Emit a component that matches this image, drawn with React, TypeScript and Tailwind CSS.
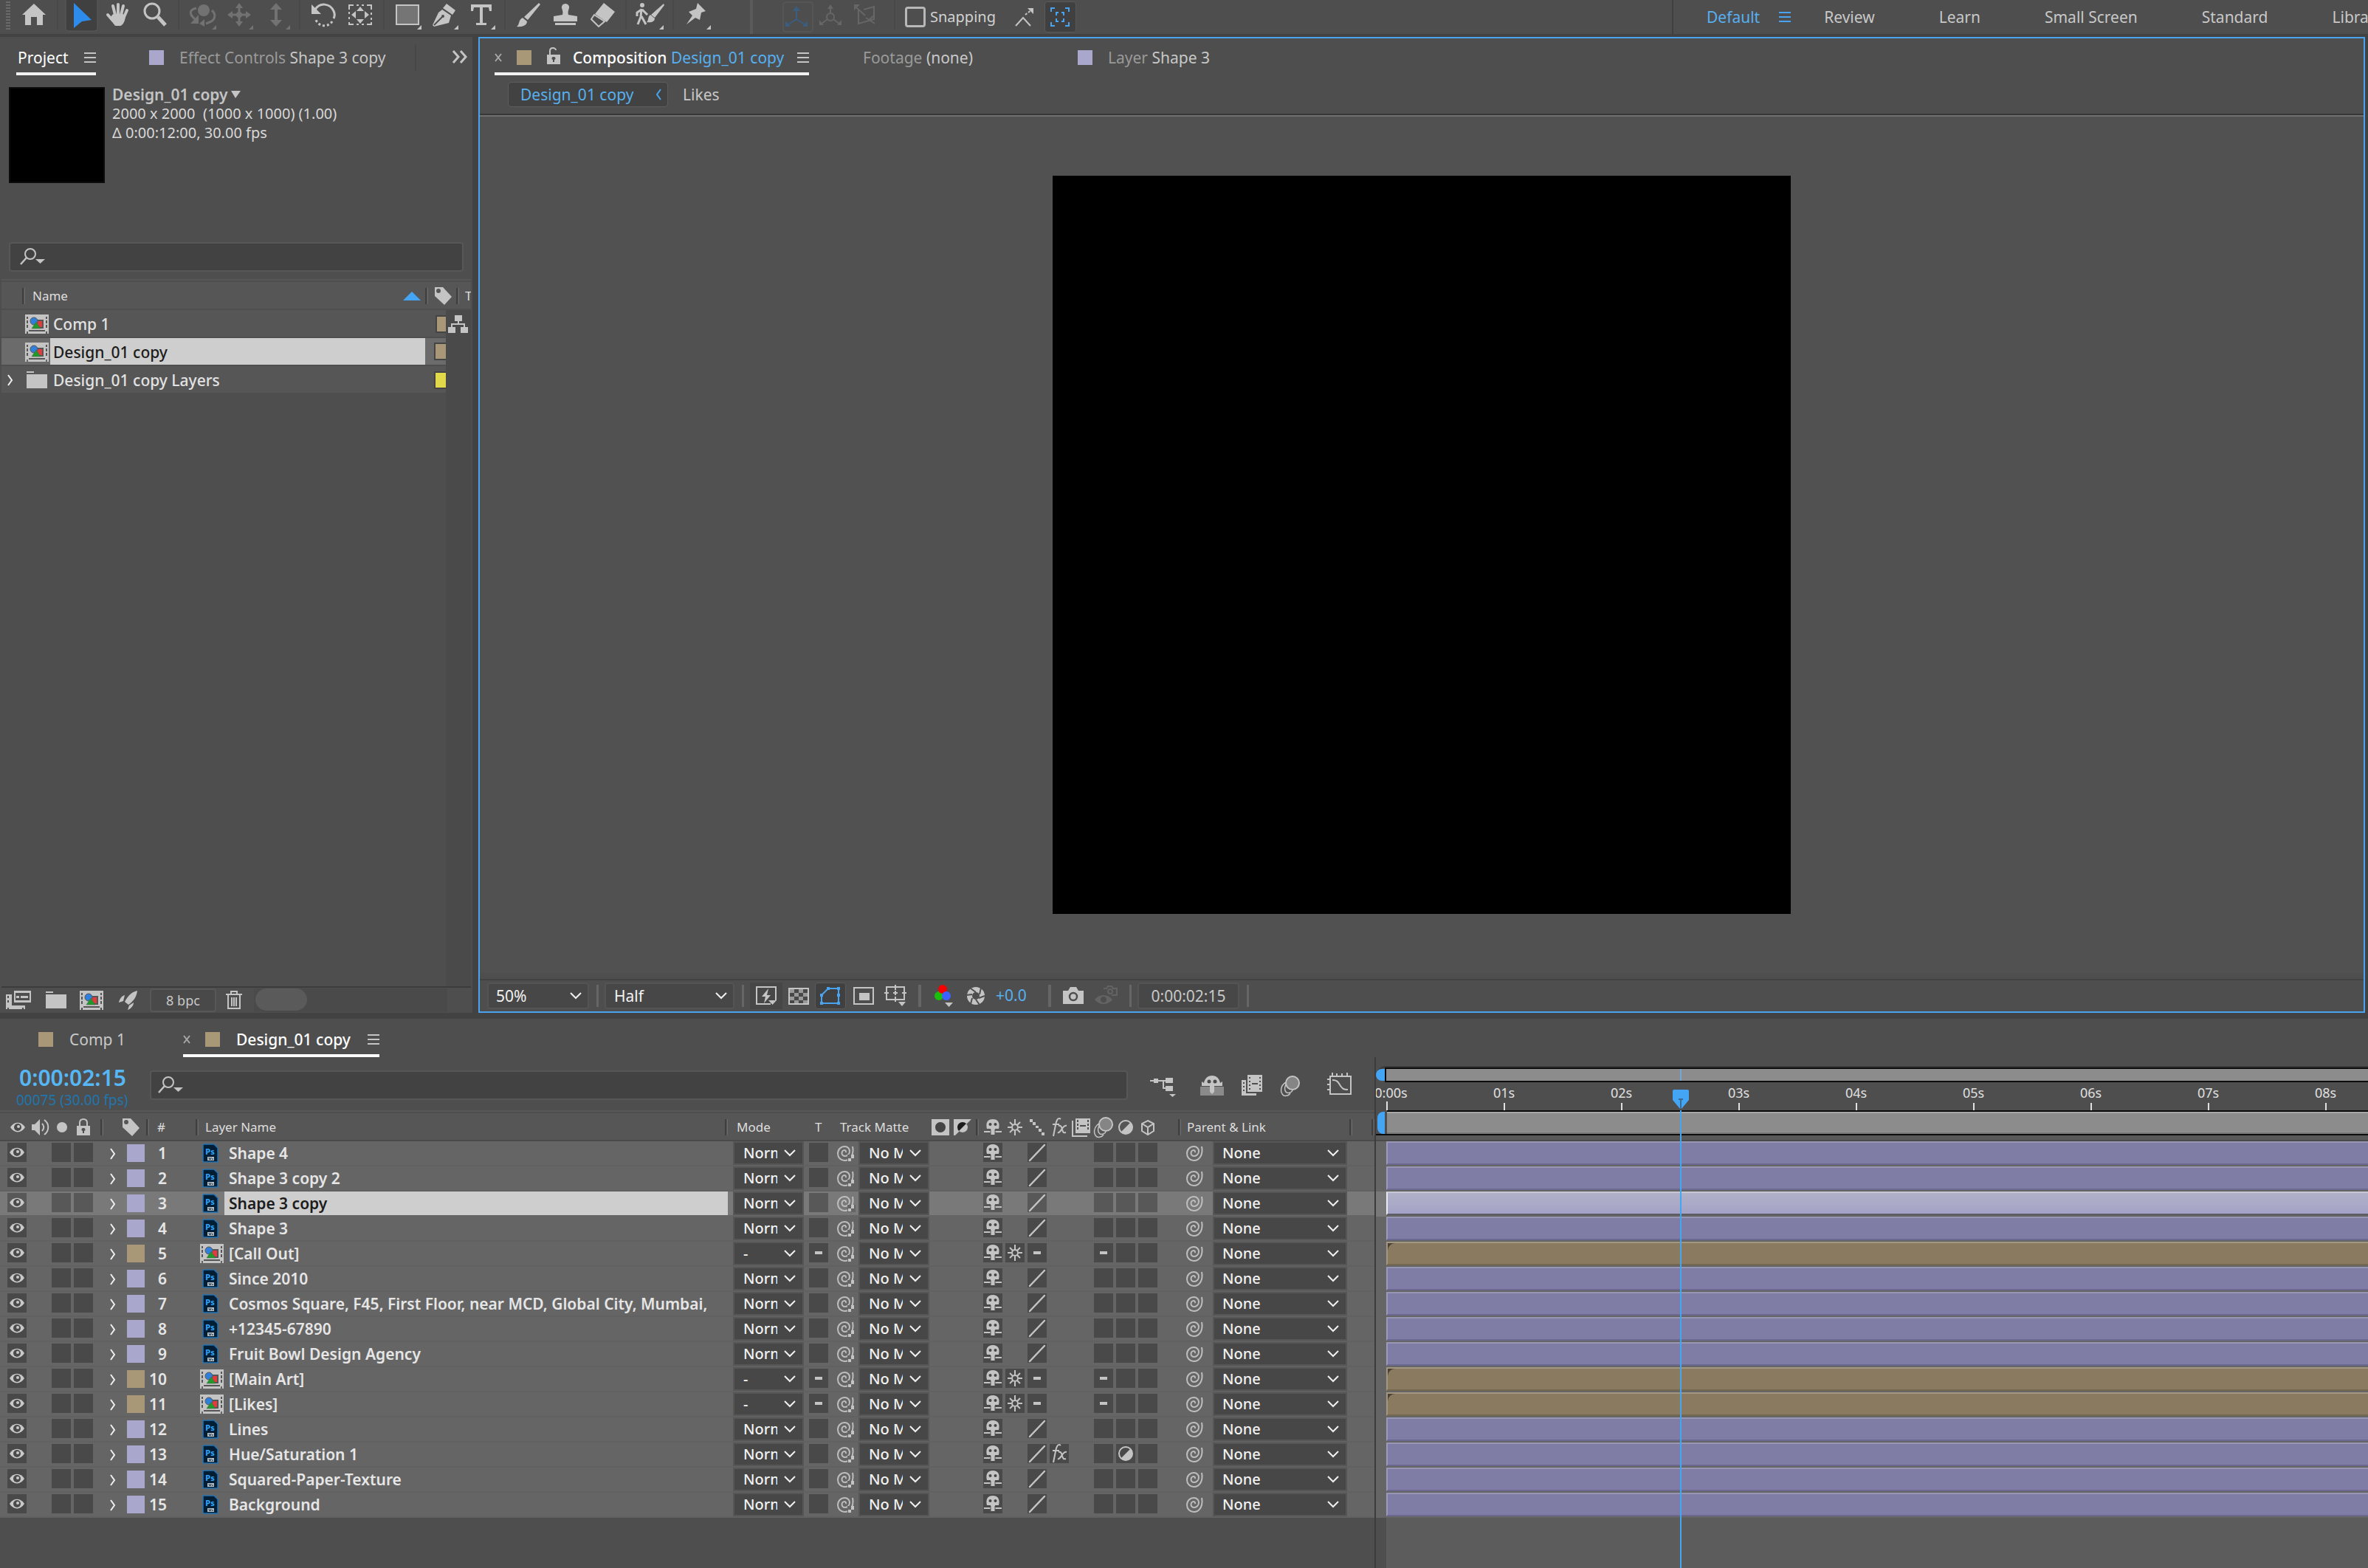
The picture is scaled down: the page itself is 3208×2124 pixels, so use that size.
import { useState } from 'react'
import type { ReactNode } from 'react'
import { twMerge } from 'tailwind-merge'

interface TypeLayer {
  name: string
  comp?: boolean
  fx?: boolean
  adjust?: boolean
}

const layers: TypeLayer[] = [
  { name: 'Shape 4' },
  { name: 'Shape 3 copy 2' },
  { name: 'Shape 3 copy' },
  { name: 'Shape 3' },
  { name: '[Call Out]', comp: true },
  { name: 'Since 2010' },
  { name: 'Cosmos Square, F45, First Floor, near MCD, Global City, Mumbai,' },
  { name: '+12345-67890' },
  { name: 'Fruit Bowl Design Agency' },
  { name: '[Main Art]', comp: true },
  { name: '[Likes]', comp: true },
  { name: 'Lines' },
  { name: 'Hue/Saturation 1', fx: true, adjust: true },
  { name: 'Squared-Paper-Texture' },
  { name: 'Background' },
]

const seconds = ['0:00s', '01s', '02s', '03s', '04s', '05s', '06s', '07s', '08s']

/* ---------- icons ---------- */

function Svg({ w, h, className, children }: { w: number; h: number; className?: string; children: ReactNode }) {
  return <svg width={w} height={h} viewBox={`0 0 ${w} ${h}`} className={twMerge('block shrink-0', className)} fill="none" aria-hidden="true">{children}</svg>
}

function MenuIcon({ className }: { className?: string }) {
  return <Svg w={16} h={16} className={twMerge('text-[#c4c4c4]', className)}>
    <path d="M0 2h16M0 8h16M0 14h16" stroke="currentColor" strokeWidth="2" />
  </Svg>
}

function CloseIcon() {
  return <Svg w={10} h={12}><path d="M1 1l8 10M9 1L1 11" stroke="#a8a8a8" strokeWidth="2" /></Svg>
}

function ChevronDown({ className }: { className?: string }) {
  return <Svg w={16} h={10} className={className}><path d="M1 1l7 7 7-7" stroke="#f0f0f0" strokeWidth="2" /></Svg>
}

function ChevronRight() {
  return <Svg w={8} h={16}><path d="M1 1l5 7-5 7" stroke="#f0f0f0" strokeWidth="2" /></Svg>
}

function SearchIcon() {
  return <Svg w={36} h={26}>
    <circle cx="15" cy="9" r="7" stroke="#c4c4c4" strokeWidth="2" />
    <path d="M10 14L2 23" stroke="#c4c4c4" strokeWidth="2.5" />
    <path d="M22 16h13l-6.500 6z" fill="#c4c4c4" />
  </Svg>
}

function TagIcon() {
  return <Svg w={24} h={26}>
    <path d="M1 1h11l12 13-10 11L1 13z" fill="#c4c4c4" />
    <circle cx="6" cy="6" r="3" fill="#565656" />
  </Svg>
}

function CompIcon() {
  return <Svg w={32} h={26}>
    <path d="M0 0h32v26h-2v-3h-2v3H4v-3H2v3H0z" fill="#c4c4c4" />
    <path d="M2 3h2v3H2zM2 8h2v4H2zM2 14h2v4H2zM28 3h2v3h-2zM28 8h2v4h-2zM28 14h2v4h-2zM5 21h22v2H5z" fill="#565656" />
    <rect x="14" y="7" width="11" height="12" fill="#565656" />
    <rect x="16" y="9" width="7" height="8" fill="#e23b3b" />
    <circle cx="12" cy="9" r="5" fill="#2f80dd" stroke="#565656" />
    <path d="M15 10l6 9H9z" fill="#1f9a2a" stroke="#565656" strokeWidth=".5" />
  </Svg>
}

function PsIcon() {
  return <svg width="22" height="26" viewBox="0 0 22 26" className="block shrink-0" aria-hidden="true">
    <path d="M2 1h14l5 5v19H2a1 1 0 0 1-1-1V2a1 1 0 0 1 1-1z" fill="#001e36" stroke="#2673b0" strokeWidth="1.500" />
    <text x="10.500" y="15" textAnchor="middle" fontSize="11" fontWeight="700" fontFamily="Noto Sans" fill="#31a8ff">Ps</text>
    <path d="M7 18h9v5H7z" fill="#b9c0c6" />
    <path d="M9 19l1 3M12 19l-1 3M14 20v2" stroke="#001e36" />
  </svg>
}

function FolderIcon() {
  return <Svg w={28} h={24}><path d="M0 0h10v2H0zM0 4h28v19H0z" fill="#c4c4c4" /></Svg>
}

function EyeIcon() {
  return <Svg w={22} h={16}>
    <path d="M1 8c5-8.500 15-8.500 20 0-5 8.500-15 8.500-20 0z" fill="#c9c9c9" />
    <circle cx="11" cy="8" r="5" fill="#4a4a4a" />
    <circle cx="12" cy="7" r="2" fill="#c9c9c9" />
  </Svg>
}

function LockIcon({ open }: { open?: boolean }) {
  return <Svg w={20} h={24}>
    <rect x="1" y="10" width="18" height="13" fill="#c4c4c4" />
    <path d={open ? 'M5 10V5c0-2 1-4 4-4s4 2 4 3' : 'M5 10V6c0-3 2-5 5-5s5 2 5 5v4'} stroke="#c4c4c4" strokeWidth="2" />
    <path d="M10 13a2 2 0 0 1 1 4v3H9v-3a2 2 0 0 1 1-4z" fill="#4e4e4e" />
  </Svg>
}

function ShyIcon() {
  return <Svg w={24} h={24}>
    <path d="M4 14c-2-8 1-13 8-13s10 5 8 13h-5v8h-6v-8z" fill="#c4c4c4" />
    <circle cx="8.500" cy="8" r="2" fill="#454545" /><circle cx="15.500" cy="8" r="2" fill="#454545" />
    <path d="M0 18h9M15 18h9" stroke="#c4c4c4" strokeWidth="2" />
    <path d="M9 15v8M15 15v8" stroke="#505050" />
  </Svg>
}

function SunIcon() {
  return <Svg w={24} h={24}>
    <circle cx="12" cy="12" r="4" stroke="#c4c4c4" strokeWidth="2" />
    <path d="M12 1v6M12 17v6M2 12h5M17 12h5M5 5l4 4M15 15l4 4M19 5l-4 4M9 15l-4 4" stroke="#c4c4c4" strokeWidth="2" />
  </Svg>
}

function FxIcon() {
  return <Svg w={24} h={28}>
    <path d="M14 3c-4-3-6 2-7 8L4 26M3 10h9" stroke="#c4c4c4" strokeWidth="2" />
    <path d="M11 12c3-1 4 1 5 5s2 5 5 4M22 12c-3-1-5 2-7 5s-3 5-5 4" stroke="#c4c4c4" strokeWidth="2" />
  </Svg>
}

function FrameBlendIcon() {
  return <Svg w={26} h={26}>
    <path d="M5 1h20v20H5z" fill="#c4c4c4" />
    <path d="M1 4v21h20" stroke="#c4c4c4" strokeWidth="2" />
    <path d="M7 3h2v3H7zM7 8h2v3H7zM7 13h2v3H7zM21 3h2v3h-2zM21 8h2v3h-2zM21 13h2v3h-2zM11 10h8v2h-8z" fill="#505050" />
  </Svg>
}

function MotionBlurIcon() {
  return <Svg w={28} h={30}>
    <path d="M8 10c-8 5-8 14-3 18 3 1 7 0 9-3M12 8c-6 5-7 13-3 16 3 1 7 0 8-3" stroke="#c4c4c4" strokeWidth="1.500" />
    <circle cx="17" cy="11" r="9" fill="#858585" stroke="#c4c4c4" strokeWidth="2" />
  </Svg>
}

function AdjustIcon() {
  return <Svg w={24} h={24}>
    <circle cx="12" cy="12" r="9" stroke="#c4c4c4" strokeWidth="2" />
    <path d="M18.500 5.500A9 9 0 1 1 5.500 18.500z" fill="#c4c4c4" />
  </Svg>
}

function CubeIcon() {
  return <Svg w={24} h={24}><path d="M12 3l8 4v10l-8 5-8-5V7zM4 7l8 5 8-5M12 12v10" stroke="#c4c4c4" strokeWidth="2" /></Svg>
}

function StepsIcon() {
  return <Svg w={24} h={24}><path d="M2 1h4v4H2zM6 5h4v4H6zM10 10h4v3h-4zM14 14h4v4h-4zM18 19h4v4h-4z" fill="#c4c4c4" /></Svg>
}

function PickwhipIcon({ matte }: { matte?: boolean }) {
  return <Svg w={26} h={28}>
    <path d="M22 5c2 10-2 19-11 19-5 0-9-4-9-9.500S6 5 11.500 5c4 0 6.500 3 6.500 6.500S15 18 12 18s-4.500-2-4.500-4 1.500-4 3.500-4 2.500 2 1.500 3" stroke="#bdbdbd" strokeWidth="2" />
    {matte && <path d="M15 16h11v10H15z" fill="#656565" />}
    {matte && <path d="M20 16h4v5h-4zM16 21h4v4h-4z" fill="#c4c4c4" />}
  </Svg>
}

const tools: { label: string; icon: ReactNode; dim?: boolean; more?: boolean; sep?: boolean; active?: boolean }[] = [
  { label: 'Home', sep: true, icon: <path d="M25 5l16 15h-4v14h-8V23h-8v11h-8V20H9z" fill="currentColor" /> },
  { label: 'Selection Tool', active: true, icon: <path d="M15 4l24 23-13 2-11 9z" fill="#2d8ceb" /> },
  {
    label: 'Hand Tool', icon: <g stroke="currentColor" strokeWidth="4" strokeLinecap="round">
      <path d="M18 8l3 12M25 6v14M32 8l-3 12M37 14l-4 9M11 20l7 8" />
      <path d="M19 21h12l2 2c-1 5-3 9-5 10h-6l-6-8z" fill="currentColor" strokeLinejoin="round" />
    </g>
  },
  { label: 'Zoom Tool', sep: true, icon: <g stroke="currentColor"><circle cx="21" cy="15" r="10" strokeWidth="3" /><path d="M29 23l10 11" strokeWidth="5" /></g> },
  {
    label: 'Orbit Tool', dim: true, more: true, icon: <g>
      <circle cx="27" cy="14" r="8" fill="currentColor" />
      <path d="M17 11c-10 2-9 8-4 13l4 4M38 14c6 5 5 13-3 16l-5 2" stroke="currentColor" strokeWidth="3" />
      <path d="M20 20v12H9zM28 26v10l-7-4z" fill="currentColor" />
    </g>
  },
  {
    label: 'Pan Tool', dim: true, more: true, icon: <g>
      <path d="M25 8v24M13 20h24" stroke="currentColor" strokeWidth="3" />
      <path d="M25 4l5 7H20zM25 36l5-7H20zM9 20l7-5v10zM41 20l-7-5v10z" fill="currentColor" />
      <circle cx="25" cy="20" r="4" fill="currentColor" />
    </g>
  },
  { label: 'Dolly Tool', sep: true, dim: true, more: true, icon: <path d="M25 4l8 9h-6v14h6l-8 9-8-9h6V13h-6z" fill="currentColor" /> },
  {
    label: 'Rotation Tool', icon: <g stroke="currentColor">
      <path d="M14 13c6-10 20-9 25 2 2 4 1 8 0 10" strokeWidth="3" />
      <path d="M37 29c-5 8-18 8-22-2" strokeWidth="3" strokeDasharray="3 3" />
      <path d="M9 6v13h13z" fill="currentColor" stroke="none" />
    </g>
  },
  {
    label: 'Pan Behind Tool', sep: true, icon: <g>
      <path d="M10 13V7h6M20 7h3M27 7h3M34 7h6v6M40 17v3M40 24v3M40 30v3h-6M30 33h-3M23 33h-3M16 33h-6v-3M10 26v-3M10 19v-3" stroke="currentColor" strokeWidth="2" />
      <path d="M25 9l5 6H20zM25 32l5-6H20zM13 20l6-5v10zM37 20l-6-5v10z" fill="currentColor" />
    </g>
  },
  { label: 'Rectangle Tool', more: true, icon: <rect x="10" y="7" width="30" height="26" fill="#757575" stroke="currentColor" strokeWidth="2" /> },
  {
    label: 'Pen Tool', more: true, icon: <g>
      <path d="M28 5l12 9-4 6-13-9zM22 13l12 8-3 10-20 5-2-2L17 17z" fill="currentColor" />
      <path d="M11 34l11-11" stroke="#4e4e4e" strokeWidth="2" /><circle cx="23" cy="22" r="2" fill="#4e4e4e" />
    </g>
  },
  { label: 'Type Tool', more: true, sep: true, icon: <path d="M11 6h28v9h-3l-1-5h-8v21h5v3H18v-3h5V10h-8l-1 5h-3z" fill="currentColor" /> },
  { label: 'Brush Tool', icon: <path d="M39 4l2 2-17 21-5-4zM17 24l6 5c0 5-6 8-14 7 4-2 2-9 8-12z" fill="currentColor" /> },
  { label: 'Clone Stamp Tool', icon: <path d="M25 5a5 5 0 0 1 5 6c-1 3-2 5-1 9l12 2v7H9v-7l12-2c1-4 0-6-1-9a5 5 0 0 1 5-6zM11 31h28v3H11z" fill="currentColor" /> },
  {
    label: 'Eraser Tool', sep: true, icon: <g>
      <path d="M27 4l15 12-11 14-16-11z" fill="currentColor" /><path d="M14 20l14 9-8 7-10-10z" stroke="currentColor" strokeWidth="2" />
    </g>
  },
  {
    label: 'Roto Brush Tool', more: true, sep: true, icon: <g>
      <circle cx="15" cy="7" r="3" fill="currentColor" />
      <path d="M14 12l-1 11-4 10M14 22l6 11M14 13l-6 4v5M15 13l7 7" stroke="currentColor" strokeWidth="3" />
      <path d="M44 5l1 2-13 17-5-4zM26 20l6 5c0 4-4 6-11 5 3-2 1-7 5-10z" fill="currentColor" />
    </g>
  },
  { label: 'Puppet Pin Tool', more: true, icon: <path d="M26 4l11 11-6 2-2 10-6-3-12 9 8-12-5-5 10-4z" fill="currentColor" /> },
]

/* ---------- small parts ---------- */

function Divider({ className }: { className?: string }) {
  return <span className={twMerge('h-[22px] w-1 shrink-0 border-l-2 border-r border-l-[#3f3f3f] border-r-[#6a6a6a]', className)} />
}

function Swatch({ className }: { className?: string }) {
  return <span className={twMerge('h-5 w-5 shrink-0 bg-[#a89878]', className)} />
}

function Switch({ lit, show = true, label, children }: { lit?: boolean; show?: boolean; label: string; children?: ReactNode }) {
  if( !show ){
    return <span className="w-[26px]" />
  }
  return <button aria-label={label} className={twMerge('flex h-[26px] w-[26px] items-center justify-center overflow-hidden bg-[#494949]', lit && 'bg-[#585858]')}>{children}</button>
}

function Dash() {
  return <span className="h-1 w-2.5 bg-[#c4c4c4]" />
}

function Dropdown({ label, value, className, selectClass, chevronClass }: { label: string; value: string; className?: string; selectClass?: string; chevronClass?: string }) {
  return <div className={twMerge('relative h-8 border-2 border-[#565656] bg-[#474747]', className)}>
    <select aria-label={label} className={twMerge('block h-7 w-full appearance-none bg-transparent text-[20px] leading-7 text-[#f2f2f2]', selectClass)}>
      <option>{value}</option>
    </select>
    <ChevronDown className={twMerge('pointer-events-none absolute right-2 top-2', chevronClass)} />
  </div>
}

/* ---------- panels ---------- */

function Toolbar() {
  const [snapping, setSnapping] = useState(false)

  return <header className="flex h-[46px] shrink-0 items-stretch overflow-hidden bg-[#4e4e4e] text-[21px] text-[#c8c8c8]">
    <div className="mr-[7px] flex w-[14px] justify-end">
      <span className="h-10 w-1.5 bg-[repeating-linear-gradient(#4e4e4e_0_2px,#6a6a6a_2px_4px)]" />
    </div>
    {
      tools.map((tool)=>{
        return <div className="flex" key={tool.label}>
          <button aria-label={tool.label} className={twMerge('w-[50px] text-[#c4c4c4]', tool.dim && 'text-[#727272]')}>
            <Svg w={50} h={46}>
              {tool.active && <rect x="4" y="-4" width="43" height="46" rx="4" fill="#404040" stroke="#5a5a5a" />}
              {tool.icon}
              {tool.more && <path d="M44 34v6h-6z" fill="currentColor" />}
            </Svg>
          </button>
          {tool.sep && <span className="mx-1.5 h-10 w-0.5 bg-[#484848]" />}
        </div>
      })
    }
    <span className="ml-[47px] mr-9 h-full w-1 bg-[#5a5a5a]" />
    <button aria-label="Local Axis Mode" className="w-[46px]">
      <Svg w={46} h={46}>
        <rect x="5" y="3" width="40" height="40" rx="3" stroke="#5c5c5c" />
        <path d="M23 12v14l-11 7M23 26l11 7" stroke="#3a5d80" strokeWidth="2" />
        <path d="M23 8l5 7H18zM8 36v-8l7 8zM38 36v-8l-7 8z" fill="#3a5d80" />
      </Svg>
    </button>
    <button aria-label="World Axis Mode" className="w-[46px]">
      <Svg w={46} h={46}>
        <circle cx="23" cy="23" r="5" stroke="#666" strokeWidth="2" />
        <path d="M23 10v8M19 26l-8 6M27 26l8 6" stroke="#666" strokeWidth="2" />
        <path d="M23 6l4 6h-8zM8 34v-7l6 7zM38 34v-7l-6 7z" fill="#666" />
      </Svg>
    </button>
    <button aria-label="View Axis Mode" className="w-[46px]">
      <Svg w={46} h={46}>
        <path d="M15 13v19l21-6V9l-14 4M12 10l12 11M25 24l12 8M37 20l-10 9" stroke="#666" strokeWidth="2" />
        <path d="M9 6h8l-8 8z" fill="#666" />
      </Svg>
    </button>
    <span className="ml-[17px] h-10 w-0.5 bg-[#484848]" />
    <label className="ml-[13px] flex h-[46px] items-center gap-1.5 text-[20px] text-[#d2d2d2]">
      <input type="checkbox" checked={snapping} onChange={()=>{ setSnapping(!snapping) }}
        className="h-7 w-7 appearance-none rounded border-[3px] border-[#b8b8b8] checked:bg-[#2d8ceb]" />
      Snapping
    </label>
    <button aria-label="Snap beyond edges" className="ml-6">
      <Svg w={32} h={46}>
        <path d="M3 35l10-11 10 11" stroke="#c4c4c4" strokeWidth="2" />
        <path d="M16 20l9-7" stroke="#c4c4c4" strokeWidth="2" strokeDasharray="3 2" />
        <path d="M19 11h8v8z" fill="#c4c4c4" />
      </Svg>
    </button>
    <button aria-label="Snap to features" className="my-0.5 ml-2.5 flex h-[42px] w-[43px] items-center justify-center rounded border border-[#595959] bg-[#404040]">
      <Svg w={26} h={26}>
        <path d="M1 6V1h5M20 1h5v5M25 20v5h-5M6 25H1v-5M8 11V7h3M15 7h3v4M18 15v4h-3M11 19H8v-4" stroke="#4aa3ee" strokeWidth="2" />
      </Svg>
    </button>

    <nav className="ml-auto flex w-[943px] shrink-0 items-center overflow-hidden border-l-2 border-[#404040] leading-[46px]">
      <a href="#default" className="ml-[45px] text-[#57b0f0]">Default</a>
      <MenuIcon className="ml-[26px] text-[#4aa3ee]" />
      <div className="ml-[45px] flex gap-[87px]">
        {
          ['Review', 'Learn', 'Small Screen', 'Standard', 'Libraries'].map((item)=>{
            return <a href={`#${item}`} className="whitespace-nowrap" key={item}>{item}</a>
          })
        }
      </div>
    </nav>
  </header>
}

function ProjectPanel() {
  return <section className="flex w-[640px] shrink-0 flex-col overflow-hidden border-t-2 border-[#4e4e4e] bg-[#4e4e4e]">
    <div className="flex h-[50px] shrink-0 items-start">
      <button className="ml-[22px] flex h-[50px] w-[108px] items-center justify-between border-b-4 border-[#f2f2f2] pl-0.5 pt-1.5 text-[21px] leading-10 text-white">
        Project<MenuIcon />
      </button>
      <button className="ml-[72px] flex h-[46px] items-center whitespace-nowrap pt-1.5 text-[21px] leading-10 text-[#9a9a9a]">
        <Swatch className="mr-[21px] bg-[#aaa7cc]" />Effect Controls&nbsp;<span className="text-[#c8c8c8]">Shape 3 copy</span>
      </button>
      <span className="ml-auto mt-2 h-9 w-0.5 bg-[#474747]" />
      <button aria-label="More panels" className="ml-[48px] mr-1.5 mt-4">
        <Svg w={22} h={18}><path d="M2 1l7 8-7 8M12 1l7 8-7 8" stroke="#c4c4c4" strokeWidth="3" /></Svg>
      </button>
    </div>

    <div className="mt-[13px] flex h-[213px] shrink-0">
      <div className="ml-3 mr-2.5 mt-[3px] h-[130px] w-[130px] border-2 border-[#0c0c0c] bg-black" />
      <div className="text-[20px] leading-[26px] text-[#d8d8d8]">
        <div className="flex items-center gap-1 text-[21px] font-semibold text-[#c4c4c4]">
          Design_01 copy
          <Svg w={13} h={10}><path d="M0 0h13L6 10z" fill="#c4c4c4" /></Svg>
        </div>
        <div className="whitespace-pre">2000 x 2000  (1000 x 1000) (1.00)</div>
        <div>Δ 0:00:12:00, 30.00 fps</div>
      </div>
    </div>

    <label className="mx-3 flex h-10 shrink-0 items-center rounded border-2 border-[#575757] bg-[#424242] pl-3">
      <SearchIcon />
      <input type="text" aria-label="Search project" className="ml-2 h-8 grow bg-transparent text-[20px] text-white outline-none" />
    </label>

    <div className="ml-0.5 mr-0.5 mt-2.5 h-0.5 shrink-0 bg-[#575757]" />
    <div className="ml-0.5 mr-0.5 mt-0.5 flex h-9 shrink-0 items-center overflow-hidden bg-[#565656] pt-0.5 text-[17px] text-[#dedede]">
      <Divider className="ml-[28px]" />
      <span className="ml-2.5">Name</span>
      <Svg w={24} h={12} className="ml-auto"><path d="M0 12L12 0l12 12z" fill="#45a5f5" /></Svg>
      <Divider className="ml-1.5" />
      <span className="ml-2"><TagIcon /></span>
      <Divider className="ml-1.5" />
      <span className="ml-2 w-2 overflow-hidden">T</span>
    </div>

    <div className="mt-0.5 flex grow">
      <div className="ml-0.5 flex grow flex-col gap-0.5 text-[21px] font-medium leading-9 text-[#e2e2e2]">
        <div className="flex h-9 items-center bg-[#565656] pt-0.5">
          <span className="ml-8 mr-1.5"><CompIcon /></span>Comp 1
          <Swatch className="ml-auto h-6 w-3.5 border-2 border-r-0 border-[#444]" />
        </div>
        <div className="flex h-9 items-center bg-[#6b6b6b]">
          <span className="ml-8 mr-0.5 pt-0.5"><CompIcon /></span>
          <span className="h-9 grow bg-[#cecece] pl-1 pt-px text-[#1c1c1c]">Design_01 copy</span>
          <Swatch className="ml-3 h-6 w-4 border-2 border-r-0 border-[#444]" />
        </div>
        <div className="flex h-9 items-center bg-[#565656] pt-0.5">
          <span className="ml-2 mr-[18px]"><ChevronRight /></span>
          <span className="mr-2"><FolderIcon /></span>Design_01 copy Layers
          <Swatch className="ml-auto h-6 w-4 border-2 border-r-0 border-[#444] bg-[#e2d94a]" />
        </div>
      </div>
      <div className="mr-0.5 w-[34px] shrink-0 bg-[#4a4a4a] pl-[3px] pt-1.5">
        <Svg w={28} h={26}>
          <path d="M9 1h10v8H9zM0 17h10v8H0zM17 17h10v8H17z" fill="#c4c4c4" />
          <path d="M14 9v4M5 17v-4h17v4" stroke="#c4c4c4" strokeWidth="2" />
        </Svg>
      </div>
    </div>

    <div className="mx-0.5 flex h-9 shrink-0 items-center border-t-2 border-[#3c3c3c]">
      <button aria-label="Interpret Footage" className="ml-1.5">
        <Svg w={34} h={28}>
          <path d="M11 1h23v16H11z" fill="#c4c4c4" />
          <path d="M13 4h19v10H13z" fill="#4e4e4e" />
          <path d="M14 8h4v3h-4zM20 8h10v3H20zM0 6h8v15h18v5h-2v-2h-2v2H4v-2H2v2H0z" fill="#c4c4c4" />
          <path d="M2 8h2v3H2zM2 14h2v3H2z" fill="#4e4e4e" />
        </Svg>
      </button>
      <button aria-label="New Folder" className="ml-5"><FolderIcon /></button>
      <button aria-label="New Composition" className="ml-[18px]"><CompIcon /></button>
      <button aria-label="Project Settings" className="ml-5">
        <Svg w={28} h={26}><path d="M26 0c-9 2-14 9-17 15l5 4C20 15 25 9 26 0zM9 6c-4 1-7 5-8 10l6-2zM21 16l-6 4-2 6c5-2 8-6 8-10z" fill="#c4c4c4" /></Svg>
      </button>
      <button className="ml-[15px] h-[32px] w-[90px] rounded border-2 border-[#575757] bg-[#494949] text-[18px] leading-7 text-[#c8c8c8]">8 bpc</button>
      <button aria-label="Delete" className="ml-[13px]">
        <Svg w={22} h={26}>
          <path d="M0 5h22M7 5V1h8v4M3 6v18h16V6M8 9v12M11 9v12M14 9v12" stroke="#c4c4c4" strokeWidth="2" />
        </Svg>
      </button>
      <div className="ml-4 mr-8 h-[32px] grow bg-[#4a4a4a]">
        <div className="ml-0.5 h-[30px] w-[70px] rounded-full bg-[#5a5a5a]" />
      </div>
    </div>
  </section>
}

function ViewerPanel() {
  return <section className="ml-2 mr-1 flex grow flex-col border-2 border-[#4aa3ee] bg-[#4e4e4e]">
    <div className="flex h-[50px] shrink-0 items-start whitespace-nowrap text-[21px] leading-10">
      <div className="ml-5 flex h-[46px] w-[426px] shrink-0 items-center pt-1.5 text-white shadow-[0_4px_0_#f2f2f2]">
        <button aria-label="Close tab"><CloseIcon /></button>
        <Swatch className="ml-5" />
        <span className="ml-5 mr-4 pb-1"><LockIcon open /></span>
        <span className="font-medium">Composition</span>&nbsp;<a href="#comp" className="text-[#57b0f0]">Design_01 copy</a>
        <MenuIcon className="ml-auto" />
      </div>
      <button className="ml-[73px] w-[150px] pt-1.5 text-left text-[#9a9a9a]">Footage <span className="text-[#c8c8c8]">(none)</span></button>
      <button className="ml-[141px] flex items-center pt-1.5 text-[#9a9a9a]">
        <Swatch className="mr-[21px] bg-[#aaa7cc]" />Layer&nbsp;<span className="text-[#c8c8c8]">Shape 3</span>
      </button>
    </div>

    <div className="flex h-[52px] shrink-0 items-start pt-[9px] text-[21px] leading-8">
      <a href="#design" className="ml-[38px] flex h-[34px] w-[217px] items-center justify-between rounded border border-[#5c5c5c] bg-[#424242] pl-4 pr-[7px] text-[#57b0f0]">
        Design_01 copy
        <Svg w={9} h={16}><path d="M7 1L2 8l5 7" stroke="#4aa3ee" strokeWidth="2" /></Svg>
      </a>
      <a href="#likes" className="ml-5 pt-px text-[#c8c8c8]">Likes</a>
    </div>

    <div className="flex grow items-center justify-center border-t-2 border-t-[#383838] bg-[#515151] pt-0.5 shadow-[inset_0_2px_0_#707070]">
      <div className="aspect-square w-[1000px] bg-black" />
    </div>

    <footer className="flex h-[52px] shrink-0 items-center pt-2 text-[21px]">
      <div className="flex h-11 grow items-center border-t-2 border-[#424242]">
        <Dropdown label="Magnification" value="50%" className="ml-2.5 h-9 w-[138px] rounded border-[#545454]" selectClass="h-8 pl-2.5 text-[21px] leading-8" chevronClass="top-[11px] right-2" />
        <span className="ml-2.5 h-[30px] w-[3px] bg-[#666]" />
        <Dropdown label="Resolution" value="Half" className="ml-2 h-9 w-[176px] rounded border-[#545454]" selectClass="h-8 pl-[11px] text-[21px] leading-8" chevronClass="top-[11px] right-2" />
        <span className="ml-2.5 h-[30px] w-[3px] bg-[#666]" />
        <button aria-label="Fast Previews" className="ml-2 flex h-9 w-11 items-center justify-center bg-[#474747]">
          <Svg w={28} h={26}>
            <path d="M20 24H1V1h26v18" stroke="#c4c4c4" strokeWidth="2" />
            <path d="M17 3L8 14h5l-2 9 9-11h-5z" fill="#c4c4c4" /><path d="M17 19h11l-5.500 6z" fill="#c4c4c4" />
          </Svg>
        </button>
        <button aria-label="Toggle Transparency Grid" className="ml-2">
          <Svg w={28} h={24}>
            <path d="M1 2h26v21H1z" stroke="#c4c4c4" strokeWidth="2" fill="#484848" />
            <path d="M2 3h6v5H2zM14 3h6v5h-6zM8 8h6v5H8zM20 8h6v5h-6zM2 13h6v5H2zM14 13h6v5h-6zM8 18h6v4H8zM20 18h6v4h-6z" fill="#999" />
          </Svg>
        </button>
        <button aria-label="Toggle Mask Visibility" className="ml-2 flex h-9 w-[42px] items-center justify-center rounded border border-[#5a5a5a] bg-[#404040]">
          <Svg w={30} h={26}>
            <path d="M3 23V12L12 3h14v20z" stroke="#4aa3ee" strokeWidth="2" />
            <path d="M1 10h4v4H1zM10 1h4v4h-4zM24 1h4v4h-4zM24 10h4v4h-4zM24 21h4v4h-4zM1 21h4v4H1z" fill="#4aa3ee" />
          </Svg>
        </button>
        <button aria-label="Region of Interest" className="ml-2.5">
          <Svg w={28} h={24}><path d="M1 1h26v22H1z" stroke="#c4c4c4" strokeWidth="2" /><path d="M8 8h14v10H8z" fill="#c4c4c4" /></Svg>
        </button>
        <button aria-label="Grid and Guides" className="ml-3.5">
          <Svg w={30} h={30}>
            <path d="M3 3h24v17H3zM15 0v7M15 16v7M0 11h6M24 11h6M12 11h6M15 8v6" stroke="#c4c4c4" strokeWidth="2" /><path d="M19 23h10l-5 6z" fill="#c4c4c4" />
          </Svg>
        </button>
        <span className="ml-4 h-[30px] w-1 bg-[#666]" />
        <button aria-label="Show Channel" className="ml-[17px]">
          <Svg w={28} h={30}>
            <circle cx="7" cy="15" r="6" fill="#19bf0c" /><circle cx="12" cy="6" r="6" fill="#f60000" /><circle cx="17" cy="15" r="6" fill="#3d62ff" />
            <path d="M15 24h11l-5.500 6z" fill="#c4c4c4" />
          </Svg>
        </button>
        <button aria-label="Reset Exposure" className="ml-4">
          <Svg w={26} h={26}>
            <circle cx="13" cy="13" r="12" fill="#c4c4c4" /><circle cx="13" cy="13" r="5" fill="#4e4e4e" />
            <path d="M13 8L6 3M18 11l2-9M17 16l8-3M13 18l5 7M8 16l-2 8M8 11l-8 1" stroke="#4e4e4e" strokeWidth="2" />
          </Svg>
        </button>
        <button className="ml-3.5 w-[71px] text-left text-[21px] text-[#57b0f0]">+0.0</button>
        <span className="h-[30px] w-1 bg-[#666]" />
        <button aria-label="Take Snapshot" className="ml-4">
          <Svg w={28} h={24}>
            <path d="M0 5h7l3-5h8l3 5h7v18H0z" fill="#c4c4c4" /><circle cx="14" cy="13" r="5" stroke="#4e4e4e" strokeWidth="2.500" />
          </Svg>
        </button>
        <button aria-label="Show Snapshot" className="ml-3.5">
          <Svg w={32} h={28}>
            <path d="M1 19c6-8 18-8 24 0-6 8-18 8-24 0z" fill="#636363" /><circle cx="13" cy="19" r="4" fill="#4e4e4e" />
            <path d="M13 4h4l2-3h5l2 3h5v9h-7" stroke="#636363" strokeWidth="2" /><circle cx="22" cy="8" r="3" stroke="#636363" strokeWidth="2" />
          </Svg>
        </button>
        <span className="ml-4 h-[30px] w-[3px] bg-[#666]" />
        <button className="ml-2 h-9 w-[138px] rounded border-2 border-[#545454] bg-[#474747] text-[21px] leading-8 text-[#c8c8c8]">0:00:02:15</button>
        <span className="ml-2.5 h-[30px] w-[3px] bg-[#666]" />
      </div>
    </footer>
  </section>
}

function LayerRow({ layer, index }: { layer: TypeLayer; index: number }) {
  const lit = index === 2

  return <tr className={twMerge('h-[34px] bg-[#656565] shadow-[inset_0_-2px_0_#616161]', lit && 'bg-[#797979] shadow-[inset_0_-2px_0_#656565]')}>
    <td className="p-0 align-top">
      <div className="flex pl-2.5 pt-0.5">
        <Switch label="Video" lit={lit}><EyeIcon /></Switch>
        <span className="w-[34px]" />
        <Switch label="Solo" lit={lit} />
        <span className="w-1" />
        <Switch label="Lock" lit={lit} />
      </div>
    </td>
    <td className="p-0 align-top">
      <div className="flex items-center pl-[13px] pt-1">
        <button aria-label="Expand layer" className="mr-[15px] pt-0.5"><ChevronRight /></button>
        <Swatch className={twMerge('h-6 w-6 bg-[#aaa7cc]', layer.comp && 'bg-[#a89878]')} />
      </div>
    </td>
    <td className="p-0 pr-[40px] text-right align-top leading-8">{index + 1}</td>
    <td className="p-0 align-top">
      <div className="flex h-8 whitespace-nowrap">
        <span className={twMerge('flex w-[38px] shrink-0 items-center justify-center', layer.comp && 'pl-1')}>{layer.comp ? <CompIcon /> : <PsIcon />}</span>
        <span className={twMerge('grow overflow-hidden pl-1.5 leading-8', lit && 'bg-[#cecece] text-[#1c1c1c]')}>{layer.name}</span>
      </div>
    </td>
    <td className="p-0 align-top">
      <Dropdown label="Mode" value={layer.comp ? '-' : 'Normal'} className="ml-[7px] w-[96px] font-medium" selectClass="pl-3 pr-[34px]" chevronClass="right-[9px] top-[9px]" />
    </td>
    <td className="p-0 align-top">
      <div className="pt-0.5"><Switch label="Preserve Transparency" lit={lit}>{layer.comp && <Dash />}</Switch></div>
    </td>
    <td className="p-0 align-top">
      <div className="flex">
        <button aria-label="Track Matte Pickwhip" className="ml-[3px] mr-1"><PickwhipIcon matte /></button>
        <Dropdown label="Track Matte" value="No Matte" className="w-[96px] font-medium" selectClass="pl-3 pr-[34px]" chevronClass="right-[9px] top-[9px]" />
      </div>
    </td>
    <td className="p-0 align-top">
      <div className="flex gap-1 pl-2 pt-0.5">
        <Switch label="Shy" lit={lit}><ShyIcon /></Switch>
        <Switch label="Collapse" show={!!layer.comp}><SunIcon /></Switch>
        <Switch label="Quality" lit={lit}>
          {layer.comp ? <Dash /> : <Svg w={26} h={26}><path d="M3 24L23 3" stroke="#c4c4c4" strokeWidth="2.500" strokeLinecap="round" /></Svg>}
        </Switch>
        <Switch label="Effects" show={!!layer.fx}><FxIcon /></Switch>
        <span className="w-[26px]" />
        <Switch label="Motion Blur" lit={lit}>{layer.comp && <Dash />}</Switch>
        <Switch label="Adjustment Layer" lit={lit}>{layer.adjust && <AdjustIcon />}</Switch>
        <Switch label="3D Layer" lit={lit} />
      </div>
    </td>
    <td className="p-0 align-top">
      <div className="flex">
        <button aria-label="Parent Pickwhip" className="ml-2 mr-[11px]"><PickwhipIcon /></button>
        <Dropdown label="Parent" value="None" className="w-[182px] font-medium" selectClass="pl-[11px]" chevronClass="right-[9px] top-[9px]" />
      </div>
    </td>
  </tr>
}

function HeadCell({ children, className }: { children?: ReactNode; className?: string }) {
  return <th className="p-0 font-normal">
    <div className={twMerge('flex h-9 items-center whitespace-nowrap pt-0.5', className)}>{children}</div>
  </th>
}

function LayerTable() {
  return <table className="w-full table-fixed border-separate border-spacing-0 text-left">
    <colgroup>
      <col className="w-[136px]" />
      <col className="w-[64px]" />
      <col className="w-[66px]" />
      <col />
      <col className="w-[110px]" />
      <col className="w-[34px]" />
      <col className="w-[194px]" />
      <col className="w-[274px]" />
      <col className="w-[264px]" />
    </colgroup>
    <thead className="bg-[#565656] text-[17px] text-[#dedede] shadow-[inset_0_-2px_0_#4a4a4a]">
      <tr className="h-[38px] align-top">
        <HeadCell className="pl-[13px]">
          <EyeIcon />
          <Svg w={24} h={24} className="ml-2">
            <path d="M0 8h4l7-7v22l-7-7H0z" fill="#c4c4c4" /><path d="M14 7c3 3 3 7 0 10M17 2c7 5 7 15 0 20" stroke="#c4c4c4" strokeWidth="2" />
          </Svg>
          <span className="ml-2.5 h-3.5 w-3.5 rounded-full bg-[#c4c4c4]" />
          <span className="ml-3"><LockIcon /></span>
          <Divider className="ml-auto mr-[-4px]" />
        </HeadCell>
        <HeadCell className="pl-[29px]"><TagIcon /><Divider className="ml-auto mr-[-2px]" /></HeadCell>
        <HeadCell className="pl-[13px]">#<Divider className="ml-auto mr-[-3px]" /></HeadCell>
        <HeadCell className="pl-3">Layer Name<Divider className="ml-auto" /></HeadCell>
        <HeadCell className="pl-3">Mode</HeadCell>
        <HeadCell className="pl-2">T</HeadCell>
        <HeadCell className="pl-2">
          Track Matte
          <Svg w={24} h={24} className="ml-auto"><path d="M0 1h24v22H0z" fill="#c4c4c4" /><circle cx="12" cy="12" r="7" fill="#454545" /></Svg>
          <Svg w={24} h={24} className="ml-1.5"><path d="M0 1h24L2 23H0z" fill="#c4c4c4" /><circle cx="12" cy="12" r="7" fill="#1c1c1c" /><path d="M17 7a7 7 0 0 1-10 10z" fill="#c4c4c4" /></Svg>
          <Divider className="ml-1.5 mr-[-2px]" />
        </HeadCell>
        <HeadCell className="pl-2">
          <span className="flex gap-1">
            {
              [<ShyIcon />, <SunIcon />, <StepsIcon />, <FxIcon />, <FrameBlendIcon />, <MotionBlurIcon />, <AdjustIcon />, <CubeIcon />].map((icon, index)=>{
                return <span className="flex w-[26px] items-center justify-center" key={index}>{icon}</span>
              })
            }
          </span>
          <Divider className="ml-auto mr-[-2px]" />
        </HeadCell>
        <HeadCell className="pl-2.5">Parent &amp; Link<Divider className="ml-auto mr-[26px]" /><Divider /></HeadCell>
      </tr>
    </thead>
    <tbody className="text-[21px] font-semibold text-[#e6e6e6]">
      {layers.map((layer, index)=><LayerRow layer={layer} index={index} key={layer.name} />)}
    </tbody>
  </table>
}

function TrackArea() {
  return <div className="relative mt-3 flex grow flex-col overflow-hidden">
    <div className="flex h-[22px] shrink-0 items-center rounded-tl-[14px] border-t-2 border-[#3a3a3a]">
      <span className="h-4 w-3 rounded-l-full bg-[#45a5f5]" />
      <span className="h-5 grow border-2 border-r-0 border-[#0c0c0c] bg-[#8c8c8c]" />
    </div>
    <div className="flex h-[38px] shrink-0 text-[18px] leading-6 text-[#e0e0e0]">
      {
        seconds.map((time, index)=>{
          return <div className={twMerge('flex h-full w-[159px] shrink-0 flex-col items-center justify-between', index === 0 && 'ml-[-65px]')} key={time}>
            <span className={twMerge('pt-0.5', index === 0 && 'pl-3')}>{time}</span>
            <span className={twMerge('h-2.5 w-0.5 bg-[#e0e0e0]', index === 0 && 'h-4')} />
          </div>
        })
      }
    </div>
    <div className="flex h-[34px] shrink-0 border-b-2 border-[#0c0c0c]">
      <span className="ml-0.5 mr-[3px] mt-0.5 w-2.5 rounded-l-lg bg-[#45a5f5]" />
      <span className="grow border-t-2 border-[#0c0c0c] bg-[#8c8c8c] shadow-[inset_0_2px_0_#a8a8a8,inset_0_-2px_0_#777]" />
    </div>
    <div className="h-2 shrink-0 border-b-2 border-[#4a4a4a] bg-[#585858]" />
    {
      layers.map((layer, index)=>{
        return <div className={twMerge('h-[34px] shrink-0 bg-[#656565] pl-3.5', index === 2 && 'bg-[linear-gradient(90deg,#797979_14px,#656565_14px)]')} key={layer.name}>
          <div className={twMerge(
            'h-8 border-b-2 border-l-2 border-t-2 border-b-[#6c6990] border-l-[#9c9abb] border-t-[#9896b5] bg-[#7f7ca5]',
            layer.comp && 'border-b-[#756850] border-l-[#a39782] border-t-[#a39782] bg-[#4a4035]',
            index === 2 && 'border-b-[#5c5c64] border-l-[#e8e8f0] border-t-[#c8c8d4] bg-linear-to-b from-[#b0b0c8] to-[#a5a3c6]'
          )}>
            {layer.comp && <div className="h-7 rounded-tl-[10px] bg-[#8a7b60]" />}
          </div>
        </div>
      })
    }
    <div className="ml-3.5 grow bg-[#5c5c5c]" />

    {/* playhead */}
    <div className="pointer-events-none absolute bottom-0 left-[402px] top-1 flex w-[22px] flex-col items-center">
      <span className="h-4 w-0.5 bg-[#6fa8d6]" />
      <Svg w={22} h={26} className="mt-3">
        <path d="M0 2a2 2 0 0 1 2-2h18a2 2 0 0 1 2 2v12L12 26h-2L0 14z" fill="#45a5f5" /><path d="M8 12h6v2h-6zM10 14h2v12h-2z" fill="#3b6a94" />
      </Svg>
      <span className="mt-0.5 w-0.5 grow bg-[#45a5f5]" />
    </div>
  </div>
}

function TimelinePanel() {
  return <section className="flex shrink-0 flex-col bg-[#4e4e4e]">
    <div className="flex h-[52px] shrink-0 items-start text-[21px] leading-10">
      <button className="ml-[52px] flex h-12 w-[196px] items-center pt-2 text-[#c8c8c8]"><Swatch className="mr-[22px]" />Comp 1</button>
      <div className="flex h-[52px] w-[266px] items-center border-b-4 border-white pt-2 text-white">
        <button aria-label="Close tab"><CloseIcon /></button>
        <Swatch className="ml-5 mr-[22px]" />
        <span className="font-medium">Design_01 copy</span>
        <MenuIcon className="ml-auto" />
      </div>
    </div>

    <div className="flex">
      <div className="flex w-[1864px] shrink-0 flex-col border-r-2 border-[#3c3c3c]">
        <div className="flex h-[72px] items-start">
          <div className="ml-[22px] w-[181px] shrink-0 pt-3">
            <div className="pl-1 text-[30px] font-semibold leading-8 text-[#57b7f5]">0:00:02:15</div>
            <div className="whitespace-nowrap text-[19px] leading-7 text-[#1f76ad]">00075 (30.00 fps)</div>
          </div>
          <label className="mt-[18px] flex h-10 grow items-center rounded border-2 border-[#575757] bg-[#424242] pl-2">
            <SearchIcon />
            <input type="text" aria-label="Search layers" className="ml-2 h-8 grow bg-transparent text-[20px] text-white outline-none" />
          </label>
          <button aria-label="Composition Mini-Flowchart" className="ml-[30px] mt-6">
            <Svg w={36} h={30}>
              <path d="M0 8h22M18 8v10h6" stroke="#c4c4c4" strokeWidth="2" />
              <path d="M5 5h6v6H5zM21 4h10v7H21zM21 15h10v7H21zM26 26h9l-4.500 4z" fill="#c4c4c4" />
            </Svg>
          </button>
          <button aria-label="Hide Shy Layers" className="ml-8 mt-6">
            <Svg w={32} h={30}>
              <path d="M0 16h32v12H0z" fill="#8a8a8a" />
              <path d="M2 15V9l3 2c1-6 5-10 11-10s10 4 11 10l3-2v6z" fill="#c4c4c4" />
              <path d="M13 14h6v9l-3 3-3-3z" fill="#c4c4c4" />
              <circle cx="12" cy="9" r="2.500" fill="#4a4a4a" /><circle cx="20" cy="9" r="2.500" fill="#4a4a4a" />
            </Svg>
          </button>
          <button aria-label="Frame Blending" className="ml-6 mt-6">
            <Svg w={28} h={30}>
              <path d="M8 0h20v23H8z" fill="#c4c4c4" /><path d="M0 7h6v18h14v3H0z" fill="#c4c4c4" />
              <path d="M10 3h2v2h-2zM10 8h2v2h-2zM10 13h2v2h-2zM10 18h2v2h-2zM24 3h2v2h-2zM24 8h2v2h-2zM24 13h2v2h-2zM24 18h2v2h-2zM14 11h8v2h-8zM2 10h2v2H2zM2 15h2v2H2zM2 20h2v2H2z" fill="#4e4e4e" />
            </Svg>
          </button>
          <button aria-label="Motion Blur" className="ml-6 mt-6"><MotionBlurIcon /></button>
          <button aria-label="Graph Editor" className="ml-9 mr-[30px] mt-5">
            <Svg w={34} h={32}>
              <path d="M4 6h28v24H4zM7 6V1M13 6V2M20 6V2M27 6V1M4 10H0M4 17H0M4 24H0" stroke="#c4c4c4" strokeWidth="2" />
              <path d="M7 11c8 0 8 4 11 8s4 5 10 5" stroke="#c4c4c4" strokeWidth="2" />
            </Svg>
          </button>
        </div>
        <div className="h-1 border-t-2 border-[#575757]" />
        <LayerTable />
        <div className="h-[68px]" />
      </div>
      <TrackArea />
    </div>
  </section>
}

export default function App() {
  return <div className="flex min-h-screen flex-col overflow-hidden bg-[#424242] font-['Noto_Sans',sans-serif]">
    <Toolbar />
    <main className="mt-1 flex grow flex-col gap-2">
      <div className="flex grow">
        <ProjectPanel />
        <ViewerPanel />
      </div>
      <TimelinePanel />
    </main>
  </div>
}
